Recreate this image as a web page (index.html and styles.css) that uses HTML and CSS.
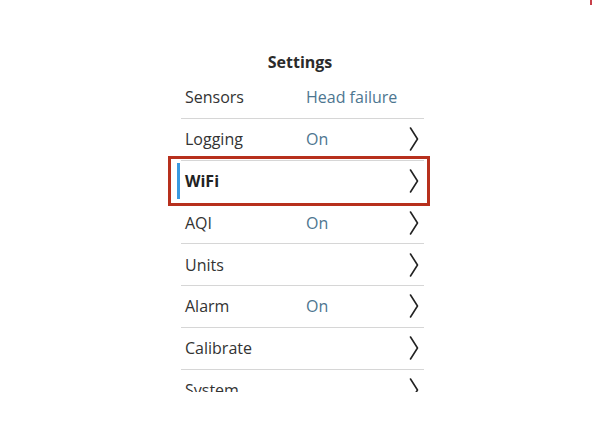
FILE: index.html
```html
<!DOCTYPE html>
<html>
<head>
<meta charset="utf-8">
<link rel="stylesheet" href="styles.css">
</head>
<body>
<div class="screen">
  <div class="title">Settings</div>
  <div class="list">
    <div class="row"><span class="label">Sensors</span><span class="value">Head failure</span></div>
    <div class="row"><span class="label">Logging</span><span class="value">On</span><svg class="chev" viewBox="0 0 10 24" width="10" height="24"><polyline points="1.5,1 8.5,12 1.5,23"/></svg></div>
    <div class="row selected"><span class="bar"></span><span class="label">WiFi</span><span class="value"></span><svg class="chev" viewBox="0 0 10 24" width="10" height="24"><polyline points="1.5,1 8.5,12 1.5,23"/></svg></div>
    <div class="row"><span class="label">AQI</span><span class="value">On</span><svg class="chev" viewBox="0 0 10 24" width="10" height="24"><polyline points="1.5,1 8.5,12 1.5,23"/></svg></div>
    <div class="row"><span class="label">Units</span><span class="value"></span><svg class="chev" viewBox="0 0 10 24" width="10" height="24"><polyline points="1.5,1 8.5,12 1.5,23"/></svg></div>
    <div class="row"><span class="label">Alarm</span><span class="value">On</span><svg class="chev" viewBox="0 0 10 24" width="10" height="24"><polyline points="1.5,1 8.5,12 1.5,23"/></svg></div>
    <div class="row"><span class="label">Calibrate</span><span class="value"></span><svg class="chev" viewBox="0 0 10 24" width="10" height="24"><polyline points="1.5,1 8.5,12 1.5,23"/></svg></div>
    <div class="row"><span class="label">System</span><span class="value"></span><svg class="chev" viewBox="0 0 10 24" width="10" height="24"><polyline points="1.5,1 8.5,12 1.5,23"/></svg></div>
  </div>
</div>
<div class="highlight"></div>
<div class="corner"></div>
</body>
</html>
```
FILE: styles.css
```css
html, body {
  margin: 0;
  padding: 0;
  background: #ffffff;
}
body {
  font-family: "Open Sans", "Noto Sans", sans-serif;
  color: #333333;
  width: 592px;
  height: 444px;
  overflow: hidden;
  position: relative;
}
.screen {
  padding-top: 51px;
}
.title {
  width: 260px;
  margin-left: 170px;
  text-align: center;
  font-weight: 700;
  font-size: 16px;
  line-height: 22px;
  color: #2b2b2b;
}
.list {
  margin-top: 4px;
  margin-left: 172px;
  width: 260px;
  height: 315px;
  overflow: hidden;
}
.row {
  position: relative;
  display: flex;
  align-items: center;
  margin-left: 9px;
  width: 243px;
  height: 40.8px;
  border-bottom: 1px solid #d6d6d6;
  font-size: 16px;
}
.label {
  padding-left: 4px;
  width: 121px;
}
.value {
  flex: 1;
  color: #4d7690;
}
.chev {
  margin-right: 5px;
  fill: none;
  stroke: #222222;
  stroke-width: 1.6;
  stroke-linecap: round;
  stroke-linejoin: round;
}
.selected {
  border-bottom-color: transparent;
}
.selected .label {
  font-weight: 700;
  color: #222222;
}
.bar {
  position: absolute;
  left: -4px;
  top: 2px;
  bottom: 2px;
  width: 3px;
  background: #3a9ae0;
}
.highlight {
  position: absolute;
  left: 168px;
  top: 156px;
  width: 256px;
  height: 44px;
  border: 3px solid #b7301d;
}
.corner {
  position: absolute;
  right: 0;
  top: 0;
  width: 2px;
  height: 5px;
  background: #c8404a;
}
```
